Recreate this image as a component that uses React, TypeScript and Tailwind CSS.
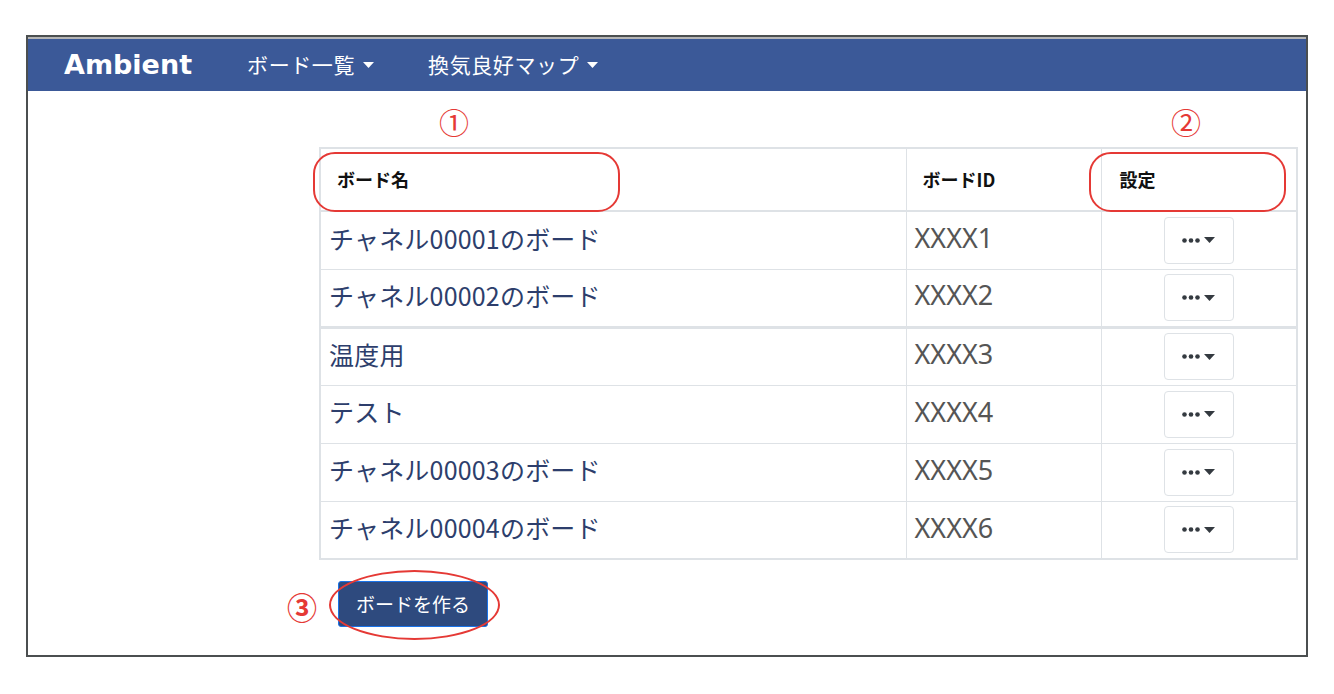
import React from 'react';

const boards = [
  { name: 'チャネル00001のボード', id: 'XXXX1' },
  { name: 'チャネル00002のボード', id: 'XXXX2' },
  { name: '温度用', id: 'XXXX3' },
  { name: 'テスト', id: 'XXXX4' },
  { name: 'チャネル00003のボード', id: 'XXXX5' },
  { name: 'チャネル00004のボード', id: 'XXXX6' },
];

const jp = { fontFamily: '"Noto Sans CJK JP", "Noto Sans", sans-serif' };

const Caret: React.FC<{ className?: string }> = ({ className }) => (
  <svg width="11" height="6" viewBox="0 0 11 6" className={className}>
    <path d="M0 0 L11 0 L5.5 6 Z" fill="currentColor" />
  </svg>
);

const MenuButton: React.FC = () => (
  <button className="w-[70px] h-[47px] rounded-[4px] border border-[#dee2e6] bg-white flex items-center justify-center gap-[4px] text-[#343a40]">
    <svg width="18" height="5" viewBox="0 0 18 5">
      <circle cx="2.5" cy="2.5" r="2.3" fill="currentColor" />
      <circle cx="9" cy="2.5" r="2.3" fill="currentColor" />
      <circle cx="15.5" cy="2.5" r="2.3" fill="currentColor" />
    </svg>
    <Caret />
  </button>
);

const App: React.FC = () => {
  return (
    <div className="min-h-screen bg-white pt-[35px] pl-[26px]" style={jp}>
      <div className="w-[1282px] border-2 border-[#4b4f50] bg-white">
        <div className="h-[2px] bg-[#b5b5b5]" />
        {/* navbar */}
        <nav className="h-[52px] bg-[#3b5998] flex items-center pl-[36px] text-white">
          <span className="text-[27px] font-bold" style={{ fontFamily: '"DejaVu Sans", sans-serif' }}>
            Ambient
          </span>
          <span className="ml-[55px] flex items-center gap-[8px] text-[21px] tracking-[0.6px]">
            ボード一覧
            <Caret />
          </span>
          <span className="ml-[54px] flex items-center gap-[8px] text-[21px] tracking-[0.6px]">
            換気良好マップ
            <Caret />
          </span>
        </nav>

        <div className="pl-[291px] pr-[9px]">
          {/* annotation numbers */}
          <div className="relative h-[56px]">
            <span className="absolute left-[120px] top-[15px] text-[30px] leading-none text-[#e53935]">①</span>
            <span className="absolute left-[852px] top-[15px] text-[30px] leading-none text-[#e53935]">②</span>
          </div>

          <table className="w-[977px] border-collapse border-2 border-[#dee2e6] table-fixed">
            <colgroup>
              <col className="w-[586px]" />
              <col className="w-[195px]" />
              <col className="w-[196px]" />
            </colgroup>
            <thead>
              <tr className="h-[63px] border-b-2 border-[#dee2e6]">
                <th className="relative text-left pl-[16px] text-[18px] font-bold text-[#111] border-r border-[#dee2e6]">
                  ボード名
                  <span className="absolute left-[-8px] top-[3px] w-[307px] h-[60px] rounded-[22px] border-[2.5px] border-[#e53935]" />
                </th>
                <th className="text-left pl-[16px] text-[18px] font-bold text-[#111] border-r border-[#dee2e6]">
                  ボードID
                </th>
                <th className="relative text-left pl-[18px] text-[18px] font-bold text-[#111]">
                  設定
                  <span className="absolute left-[-13px] top-[3px] w-[197px] h-[60px] rounded-[22px] border-[2.5px] border-[#e53935]" />
                </th>
              </tr>
            </thead>
            <tbody>
              {boards.map((b, i) => (
                <tr
                  key={b.id}
                  className={
                    i === 1
                      ? 'h-[58px] border-b-[3px] border-[#dee2e6]'
                      : 'h-[58px] border-b border-[#dee2e6]'
                  }
                >
                  <td className="pl-[8px] pb-[4px] text-[25px] tracking-[0.2px] text-[#2d3e6c] border-r border-[#dee2e6] whitespace-nowrap">
                    {b.name}
                  </td>
                  <td
                    className="pl-[8px] pb-[4px] text-[27px] text-[#555] border-r border-[#dee2e6]"
                    style={{ fontFamily: '"Noto Sans", sans-serif' }}
                  >
                    {b.id}
                  </td>
                  <td>
                    <div className="flex justify-center">
                      <MenuButton />
                    </div>
                  </td>
                </tr>
              ))}
            </tbody>
          </table>

          {/* create button */}
          <div className="relative mt-[21px] pb-[28px] flex">
            <span className="absolute left-[-32px] top-[10px] text-[30px] leading-none font-bold text-[#e53935]">③</span>
            <button className="ml-[19px] w-[150px] h-[46px] rounded-[3px] bg-[#2e4a7e] border border-[#1a73e8] text-white text-[19px]">
              ボードを作る
            </button>
            <span className="absolute left-[10px] top-[-11px] w-[171px] h-[70px] rounded-[50%] border-[2.5px] border-[#e53935]" />
          </div>
        </div>
      </div>
    </div>
  );
};

export default App;
